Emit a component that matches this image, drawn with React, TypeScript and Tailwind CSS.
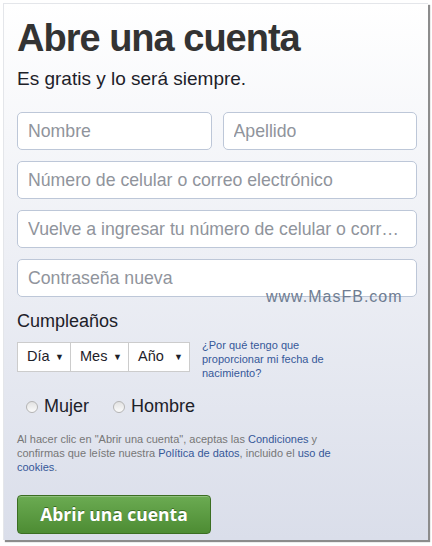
import React from "react";

const font = { fontFamily: '"Liberation Sans", Arial, sans-serif' };

function Field({ placeholder, className = "" }: { placeholder: string; className?: string }) {
  return (
    <div
      className={`h-[38px] rounded-[5px] border border-[#bdc7d8] bg-white pl-[10px] pr-[8px] flex items-center text-[17.7px] text-[#90949c] whitespace-nowrap overflow-hidden ${className}`}
    >
      <span className="truncate">{placeholder}</span>
    </div>
  );
}

function Select({ label, w }: { label: string; w: string }) {
  return (
    <div className={`${w} h-[30px] border border-[#ccc] bg-white flex items-center justify-between pl-[9px] pr-[6px] text-[14.5px] text-[#1d2129]`}>
      <span>{label}</span>
      <span className="text-[9px] leading-none">▼</span>
    </div>
  );
}

function Radio({ label }: { label: string }) {
  return (
    <label className="flex items-center gap-[6px]">
      <span className="w-[12px] h-[12px] rounded-full border border-[#b4b4b4] bg-gradient-to-b from-[#e2e2e2] to-[#fbfbfb]" />
      <span className="text-[18px] text-[#1d2129]">{label}</span>
    </label>
  );
}

export default function App() {
  return (
    <div className="w-[432px] h-[546px] bg-white pt-[3px] pl-[3px]" style={font}>
      <div className="relative w-[425px] h-[537px] border-l border-t border-[#e4e6ea] bg-gradient-to-b from-white to-[#dadeea] shadow-[2px_2px_1px_rgba(0,0,0,0.45)] pl-[13px] pr-[11px] pt-[14px]">
        <h1 className="text-[38px] leading-[40px] font-bold tracking-[-1px] text-[#333]">Abre una cuenta</h1>
        <p className="mt-[10px] text-[19px] leading-[22px] text-[#1d2129]">Es gratis y lo será siempre.</p>

        <div className="mt-[22px] flex flex-col gap-[11px]">
          <div className="flex gap-[11px]">
            <Field placeholder="Nombre" className="flex-1" />
            <Field placeholder="Apellido" className="flex-1" />
          </div>
          <Field placeholder="Número de celular o correo electrónico" />
          <Field placeholder="Vuelve a ingresar tu número de celular o correo electrónico" />
          <Field placeholder="Contraseña nueva" />
        </div>

        <span className="absolute left-[262px] top-[281px] text-[16px] tracking-[1px] text-[#6f7d92]">www.MasFB.com</span>

        <p className="mt-[13px] text-[18px] leading-[22px] text-[#1d2129]">Cumpleaños</p>

        <div className="mt-[10px] flex items-start">
          <div className="flex">
            <Select label="Día" w="w-[54px]" />
            <Select label="Mes" w="w-[59px] -ml-px" />
            <Select label="Año" w="w-[62px] -ml-px" />
          </div>
          <p className="ml-[12px] -mt-[4px] w-[135px] text-[11px] leading-[14px] text-[#365899]">
            ¿Por qué tengo que proporcionar mi fecha de nacimiento?
          </p>
        </div>

        <div className="mt-[13px] ml-[9px] flex gap-[24px]">
          <Radio label="Mujer" />
          <Radio label="Hombre" />
        </div>

        <p className="mt-[12px] w-[320px] text-[11px] leading-[14px] text-[#777]">
          Al hacer clic en "Abrir una cuenta", aceptas las <span className="text-[#365899]">Condiciones</span> y
          confirmas que leíste nuestra <span className="text-[#365899]">Política de datos</span>, incluido el{" "}
          <span className="text-[#365899]">uso de cookies</span>.
        </p>

        <button
          className="mt-[21px] w-[194px] h-[39px] rounded-[4px] border border-[#3b6e22] bg-gradient-to-b from-[#6bab52] to-[#4d8c33] shadow-[inset_0_1px_0_rgba(255,255,255,0.25)] text-white text-[17.5px] font-bold [text-shadow:0_-1px_0_#3a6a22]"
          style={{ fontFamily: '"Open Sans", "Liberation Sans", sans-serif' }}
        >
          Abrir una cuenta
        </button>
      </div>
    </div>
  );
}
